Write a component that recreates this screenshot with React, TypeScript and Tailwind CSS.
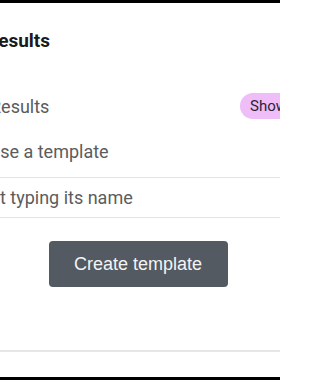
export default function App() {
  return (
    <div className="w-[280px] h-[380px] overflow-hidden bg-white flex flex-col font-['Roboto',sans-serif]">
      <div className="h-[3px] bg-black shrink-0" />

      {/* Card body, clipped on the left */}
      <div className="flex-1 flex flex-col">
        <h2 className="mt-[26px] -ml-[14px] text-[19px] font-bold leading-[24px] text-[#1a1a1a] whitespace-nowrap">
          Results
        </h2>

        <div className="mt-[40px] flex items-center justify-between h-[26px]">
          <span className="-ml-[10px] text-[18px] text-[#5a5a5a] whitespace-nowrap">Results</span>
          <span className="-mr-[30px] w-[70px] shrink-0 h-[26px] flex items-center pl-[10px] rounded-full bg-[#efbdf7] text-[15px] text-[#2e1f33] whitespace-nowrap">
            Show all
          </span>
        </div>

        <div className="pt-[21px] pb-[13px] border-b border-[#e4e4e4]">
          <div className="-ml-[42px] text-[18px] leading-[24px] text-[#5c5c5c] whitespace-nowrap">Choose a template</div>
        </div>
        <div className="pt-[8px] pb-[7px] border-b border-[#e4e4e4]">
          <div className="-ml-[33px] text-[18px] leading-[24px] text-[#5c5c5c] whitespace-nowrap">Start typing its name</div>
        </div>

        <div className="mt-[23px] flex justify-center pr-[4px]">
          <button className="w-[179px] h-[46px] rounded-[4px] bg-[#535a62] text-[#f4f4f4] text-[18px] font-['Liberation_Sans',sans-serif]">
            Create template
          </button>
        </div>

        <div className="mt-[63px] h-[2px] bg-[#e6e6e6]" />
      </div>

      <div className="h-[3px] bg-black shrink-0" />
    </div>
  );
}
